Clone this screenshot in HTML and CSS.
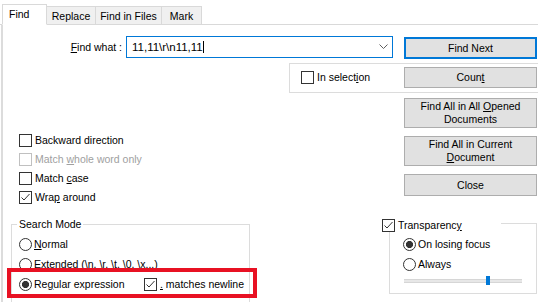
FILE: index.html
```html
<!DOCTYPE html>
<html>
<head>
<meta charset="utf-8">
<link rel="stylesheet" href="styles.css">
</head>
<body>
<div class="dialog">
  <div class="tabbar">
    <div class="tab active">Find</div>
    <div class="tab t-replace">Replace</div>
    <div class="tab t-files">Find in Files</div>
    <div class="tab t-mark">Mark</div>
  </div>
  <div class="panel">
    <div class="row1">
      <div class="find-label"><u>F</u>ind what :</div>
      <div class="combo">
        <span class="combo-text">11,11\r\n11,11</span><span class="caret"></span>
        <svg class="chev" width="9" height="6" viewBox="0 0 9 6"><polyline points="0.5,0.5 4.5,4.5 8.5,0.5" fill="none" stroke="#606060" stroke-width="1"/></svg>
      </div>
      <button class="btn btn-default">Find Next</button>
    </div>
    <div class="selgroup">
      <div class="opt"><span class="cb"></span><span>In select<u>i</u>on</span></div>
      <button class="btn btn-count">Coun<u>t</u></button>
    </div>
    <div class="row3">
      <div class="opts">
        <div class="opt opt-row"><span class="cb"></span><span>Backward direction</span></div>
        <div class="opt opt-row disabled"><span class="cb"></span><span>Match <u>w</u>hole word only</span></div>
        <div class="opt opt-row"><span class="cb"></span><span>Match <u>c</u>ase</span></div>
        <div class="opt opt-row"><span class="cb checked"><svg width="11" height="11" viewBox="0 0 11 11"><polyline points="1.5,5.5 4,8 9.5,2" fill="none" stroke="#333" stroke-width="1"/></svg></span><span>Wra<u>p</u> around</span></div>
      </div>
      <div class="btncol">
        <button class="btn btn-tall">Find All in All <u>O</u>pened<br>Documents</button>
        <button class="btn btn-tall">Find All in Current<br><u>D</u>ocument</button>
        <button class="btn btn-close">Close</button>
      </div>
    </div>
    <div class="row4">
      <div class="group search">
        <div class="gtitle">Search Mode</div>
        <div class="rrow first"><span class="rd"></span><span><u>N</u>ormal</span></div>
        <div class="rrow"><span class="rd"></span><span><u>E</u>xtended (\n, \r, \t, \0, \x...)</span></div>
        <div class="rrow">
          <div class="rd-opt"><span class="rd on"></span><span>Re<u>g</u>ular expression</span></div>
          <div class="opt"><span class="cb checked"><svg width="11" height="11" viewBox="0 0 11 11"><polyline points="1.5,5.5 4,8 9.5,2" fill="none" stroke="#333" stroke-width="1"/></svg></span><span><u>.</u> matches newline</span></div>
        </div>
      </div>
      <div class="group transp">
        <div class="ttitle"><span class="cb checked"><svg width="11" height="11" viewBox="0 0 11 11"><polyline points="1.5,5.5 4,8 9.5,2" fill="none" stroke="#333" stroke-width="1"/></svg></span><span>Transparenc<u>y</u></span></div>
        <div class="rrow first2"><span class="rd on"></span><span>On losing focus</span></div>
        <div class="rrow"><span class="rd"></span><span>Always</span></div>
        <div class="slider"><div class="thumb"></div></div>
      </div>
    </div>
  </div>
  <div class="highlight"></div>
</div>
</body>
</html>
```
FILE: styles.css
```css
* { box-sizing: border-box; }
html, body { margin: 0; padding: 0; background: #fff; }
body {
  font-family: "Liberation Sans", Arial, sans-serif;
  font-size: 10.5px;
  line-height: 13px;
  color: #000;
}
u { text-underline-offset: 1px; }
.dialog {
  position: relative;
  width: 538px;
  height: 302px;
  overflow: hidden;
  background: #fff;
}
.tabbar {
  display: flex;
  align-items: flex-end;
  height: 25px;
  border-bottom: 1px solid #d9d9d9;
  padding-left: 2px;
}
.tab {
  height: 19px;
  border: 1px solid #d9d9d9;
  background: #f0f0f0;
  margin-bottom: -1px;
  margin-left: -1px;
  display: flex;
  align-items: center;
  justify-content: center;
  padding-top: 1px;
}
.tab.active {
  position: relative;
  z-index: 1;
  margin-left: 0;
  width: 45px;
  height: 21px;
  background: #fff;
  border-bottom-color: #fff;
  justify-content: flex-start;
  padding-left: 6px;
  padding-top: 0;
}
.t-replace { width: 50px; }
.t-files { width: 67px; }
.t-mark { width: 41px; }

.panel {
  margin-left: 1px;
  border-left: 2px solid #dcdcdc;
  padding-top: 11px;
  height: 277px;
}
.row1 {
  display: flex;
  align-items: flex-start;
  height: 23px;
}
.find-label {
  width: 119px;
  text-align: right;
  margin-top: 5px;
}
.combo {
  margin-left: 4px;
  width: 267px;
  height: 22px;
  border: 1px solid #0078d7;
  display: flex;
  align-items: center;
  padding-left: 5px;
  font-size: 11.5px;
}
.caret {
  display: inline-block;
  width: 1px;
  height: 12px;
  background: #000;
}
.chev { margin-left: auto; margin-right: 4px; }
.btn {
  font: inherit;
  line-height: 13px;
  background: #e1e1e1;
  border: 1px solid #adadad;
  color: #000;
  padding: 0;
  text-align: center;
  display: block;
  border-radius: 0;
}
.btn-default {
  margin-left: 11px;
  margin-top: 1px;
  width: 133px;
  height: 22px;
  border: 2px solid #0078d7;
}
.selgroup {
  display: flex;
  align-items: center;
  margin-top: 4px;
  margin-left: 286px;
  border: 1px solid #dcdcdc;
  border-right: none;
  height: 30px;
  padding: 3px 1px 4px 11px;
}
.btn-count {
  margin-left: auto;
  width: 133px;
  height: 21px;
}
.opt {
  display: flex;
  align-items: center;
  gap: 3px;
}
.cb {
  width: 13px;
  height: 13px;
  border: 1px solid #333;
  background: #fff;
  flex: none;
  display: block;
}
.cb svg { display: block; }
.disabled { color: #a0a0a0; }
.disabled .cb { border-color: #c0c0c0; }

.row3 {
  display: flex;
  align-items: flex-start;
  margin-top: 5px;
}
.opts {
  margin-left: 16px;
  padding-top: 36px;
}
.opt-row {
  height: 13px;
  margin-bottom: 6px;
}
.btncol {
  margin-left: auto;
  margin-right: 1px;
  width: 133px;
  display: flex;
  flex-direction: column;
  gap: 8px;
}
.btn-tall { height: 30px; width: 133px; }
.btn-close { height: 22px; width: 133px; }

.row4 {
  display: flex;
  align-items: flex-start;
  margin-top: 13px;
}
.group { border: 1px solid #dcdcdc; }
.search {
  margin-left: 8px;
  margin-top: 1px;
  width: 239px;
  height: 100px;
  padding-left: 7px;
}
.gtitle {
  width: max-content;
  background: #fff;
  margin-top: -8px;
  margin-left: -2px;
  padding: 0 2px;
  height: 14px;
  display: flex;
  align-items: center;
}
.rrow {
  height: 20px;
  display: flex;
  align-items: center;
  gap: 2px;
  white-space: nowrap;
}
.rrow.first { margin-top: 3px; }
.rrow.first2 { margin-top: 2px; }
.rd-opt {
  width: 123px;
  flex: none;
  display: flex;
  align-items: center;
  gap: 2px;
}
.rd {
  width: 13px;
  height: 13px;
  border: 1px solid #333;
  border-radius: 50%;
  background: #fff;
  flex: none;
  display: block;
}
.rd.on {
  background: radial-gradient(circle, #333 0, #333 3.2px, #fff 3.9px);
}
.transp {
  margin-left: 139px;
  width: 148px;
  height: 71px;
  padding-left: 13px;
}
.ttitle {
  display: flex;
  align-items: center;
  gap: 3px;
  width: 120px;
  height: 13px;
  margin-left: -22px;
  margin-top: -5px;
  padding-left: 1px;
  background: #fff;
}
.slider {
  margin-left: 1px;
  margin-top: 2px;
  width: 118px;
  height: 9px;
  background: linear-gradient(to bottom, transparent 0, transparent 3px, #d6d6d6 3px, #d6d6d6 4px, #e7e7e7 4px, #e7e7e7 6px, #d6d6d6 6px, #d6d6d6 7px, transparent 7px);
}
.thumb {
  margin-left: 82px;
  width: 4px;
  height: 9px;
  background: #0078d7;
}
.highlight {
  position: absolute;
  left: 7px;
  top: 268px;
  width: 250px;
  height: 30px;
  border: 4px solid #e81123;
}
```
